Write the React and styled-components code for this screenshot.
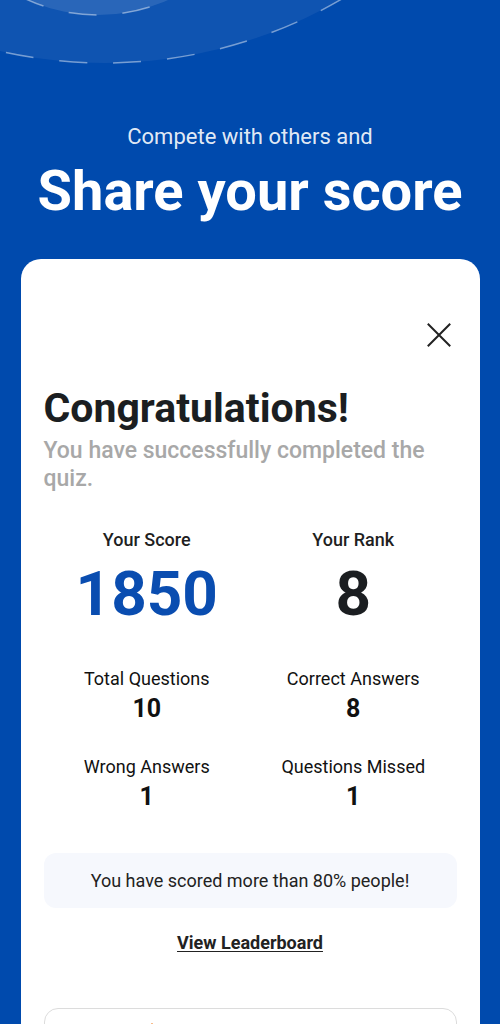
import React from 'react';
import styled, { createGlobalStyle } from 'styled-components';

const GlobalStyle = createGlobalStyle`
  html, body {
    margin: 0;
    padding: 0;
    background: #004aad;
    font-family: Roboto, "Noto Sans", "Liberation Sans", sans-serif;
    overflow: hidden;
  }
`;

const Page = styled.div`
  width: 500px;
  min-height: 1024px;
  background: #004aad;
  display: flex;
  flex-direction: column;
  align-items: center;
`;

const Decor = styled.svg`
  display: block;
  width: 500px;
  height: 64px;
`;

const Tagline = styled.p`
  margin: 60px 0 0;
  font-size: 22px;
  line-height: 26px;
  color: rgba(255, 255, 255, 0.9);
  text-align: center;
`;

const Title = styled.h1`
  margin: 8px 0 0;
  font-size: 56px;
  line-height: 66px;
  font-weight: 700;
  color: #fff;
  text-align: center;
`;

const Card = styled.section`
  box-sizing: border-box;
  width: 459px;
  margin-top: 35px;
  background: #fff;
  border-radius: 20px;
  padding: 64px 23px 40px;
  display: flex;
  flex-direction: column;
`;

const CloseRow = styled.div`
  display: flex;
  justify-content: flex-end;
  padding-right: 6px;
`;

const CloseButton = styled.button`
  border: 0;
  background: none;
  padding: 0;
  width: 24px;
  height: 24px;
  cursor: pointer;
  svg { display: block; }
`;

const Heading = styled.h2`
  margin: 40px 0 0;
  font-size: 41px;
  line-height: 42px;
  font-weight: 700;
  color: #1b1e21;
`;

const Sub = styled.p`
  margin: 8px 0 0;
  font-size: 23px;
  line-height: 28px;
  font-weight: 500;
  color: #a8a8a8;
`;

const Grid = styled.div`
  display: grid;
  grid-template-columns: 1fr 1fr;
  margin-top: ${p => p.$top}px;
  text-align: center;
`;

const Stat = styled.div`
  display: flex;
  flex-direction: column;
  align-items: center;
`;

const BigLabel = styled.span`
  font-size: 18px;
  line-height: 20px;
  font-weight: 500;
  color: #1f1f1f;
`;

const BigValue = styled.span`
  margin-top: 9px;
  font-size: 62px;
  line-height: 70px;
  font-weight: 700;
  color: ${p => (p.$accent ? '#0a4db0' : '#1b1e21')};
`;

const Label = styled.span`
  font-size: 18px;
  line-height: 20px;
  color: #111;
`;

const Value = styled.span`
  margin-top: 6px;
  font-size: 25px;
  line-height: 28px;
  font-weight: 700;
  color: #111;
`;

const Banner = styled.div`
  margin-top: 42px;
  height: 55px;
  border-radius: 12px;
  background: #f6f8fd;
  display: flex;
  align-items: center;
  justify-content: center;
  font-size: 18px;
  color: #222;
`;

const LeaderLink = styled.a`
  align-self: center;
  margin-top: 25px;
  font-size: 18px;
  line-height: 20px;
  font-weight: 700;
  color: #222;
  text-decoration: underline;
  text-underline-offset: 2px;
  cursor: pointer;
`;

const ShareCard = styled.div`
  margin-top: 55px;
  height: 72px;
  border: 1px solid #dcdcdc;
  border-radius: 14px;
  padding: 13px 20px 0 96px;
  display: flex;
  align-items: flex-start;
`;

const Circles = () => (
  <Decor viewBox="0 0 500 64">
    <circle cx="105" cy="-407" r="470" fill="rgba(255,255,255,0.06)"
      stroke="rgba(255,255,255,0.45)" strokeWidth="1.5" strokeDasharray="28 26" />
    <circle cx="98" cy="-156" r="171" fill="rgba(255,255,255,0.11)"
      stroke="rgba(255,255,255,0.45)" strokeWidth="1.5" strokeDasharray="28 26" />
  </Decor>
);

const stats = [
  [{ label: 'Total Questions', value: 10 }, { label: 'Correct Answers', value: 8 }],
  [{ label: 'Wrong Answers', value: 1 }, { label: 'Questions Missed', value: 1 }],
];

export default function App() {
  return (
    <Page>
      <GlobalStyle />
      <Circles />
      <Tagline>Compete with others and</Tagline>
      <Title>Share your score</Title>
      <Card>
        <CloseRow>
          <CloseButton aria-label="Close">
            <svg width="24" height="24" viewBox="0 0 24 24" fill="none"
              stroke="#222" strokeWidth="2" strokeLinecap="square">
              <path d="M1.5 1.5 L22.5 22.5 M22.5 1.5 L1.5 22.5" />
            </svg>
          </CloseButton>
        </CloseRow>
        <Heading>Congratulations!</Heading>
        <Sub>You have successfully completed the quiz.</Sub>

        <Grid $top={37}>
          <Stat>
            <BigLabel>Your Score</BigLabel>
            <BigValue $accent>1850</BigValue>
          </Stat>
          <Stat>
            <BigLabel>Your Rank</BigLabel>
            <BigValue>8</BigValue>
          </Stat>
        </Grid>

        {stats.map((row, i) => (
          <Grid key={i} $top={i === 0 ? 40 : 34}>
            {row.map(s => (
              <Stat key={s.label}>
                <Label>{s.label}</Label>
                <Value>{s.value}</Value>
              </Stat>
            ))}
          </Grid>
        ))}

        <Banner>You have scored more than 80% people!</Banner>
        <LeaderLink>View Leaderboard</LeaderLink>

        <ShareCard>
          <svg width="22" height="22" viewBox="0 0 24 24" fill="none" stroke="#f5a25d" strokeWidth="2" strokeLinecap="round">
            <path d="M12 2v5M12 17v5M2 12h5M17 12h5M5 5l3 3M16 16l3 3M19 5l-3 3M8 16l-3 3" />
          </svg>
        </ShareCard>
      </Card>
    </Page>
  );
}
